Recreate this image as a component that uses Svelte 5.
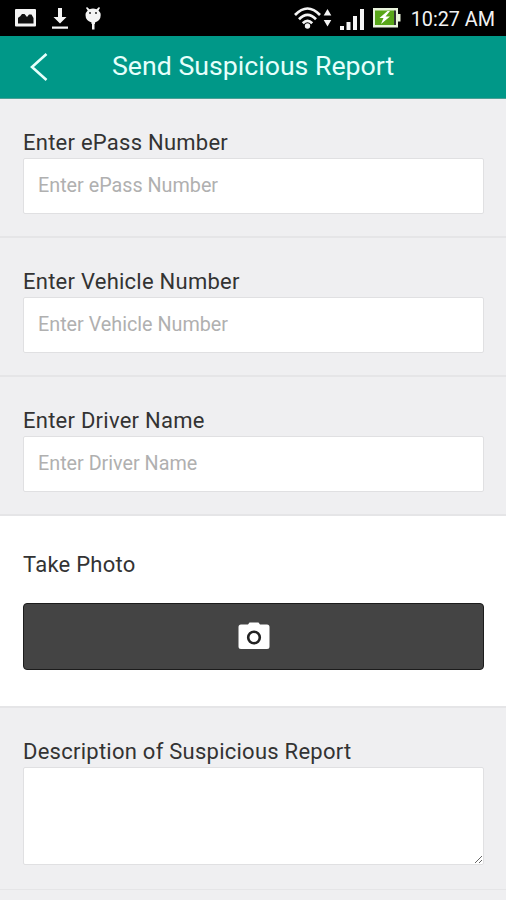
<script>
   const fields = [
      { id: "epass-number", label: "Enter ePass Number" },
      { id: "vehicle-number", label: "Enter Vehicle Number" },
      { id: "driver-name", label: "Enter Driver Name" }
   ];

   let values = $state({});
   let description = $state("");
</script>

<div class="screen">
   <div class="status-bar">
      <svg class="picture" width="22" height="19" viewBox="0 0 22 19">
         <rect width="21" height="17.500" rx="1" fill="#f4f4f4" />
         <path fill="#111" d="M3 14.500V9Q4 7.500 5 7.500L7 5h2.500L12 8l2-2.500h2.500L18.500 9v5.500z" />
      </svg>
      <svg class="download" width="18" height="22" viewBox="0 0 18 22">
         <path fill="#f4f4f4" d="M7 0h4v9h4.500L9 15.500 2.500 9H7zM1 18.500h16v2.200H1z" />
      </svg>
      <svg class="android" width="18" height="23" viewBox="0 0 18 23">
         <path fill="#f4f4f4" d="M3 0l2.500 2.200Q9 1 12.500 2.200L15 0l1 1-1.500 2.500q2.200 2 2.200 4.500 0 5.500-5.700 7.500v1.500h-.500v5.500H8V17h-.500v-1.500Q1.500 13.500 1.500 8q0-2.500 2.200-4.500L2 1z" />
         <circle cx="6" cy="6" r="0.900" fill="#111" />
         <circle cx="12" cy="6" r="0.900" fill="#111" />
      </svg>
      <span class="spacer"></span>
      <svg class="wifi" width="38" height="24" viewBox="0 0 38 24">
         <g fill="none" stroke="#f4f4f4" stroke-width="2.700">
            <path d="M1 9Q13.500-4 26 9" />
            <path d="M5 13.200Q13.500 4.500 22 13.200" />
            <path d="M8.800 17.200Q13.500 12.500 18.200 17.200" />
         </g>
         <circle cx="13.500" cy="20" r="2.700" fill="#f4f4f4" />
         <path fill="#f4f4f4" d="M33.500 3l3.800 6.500h-7.600zM33.500 20.500l3.800-6.500h-7.600z" />
      </svg>
      <svg class="signal" width="25" height="22" viewBox="0 0 25 22">
         <path fill="#f4f4f4" d="M0 17h4v4H0zM6.500 13h4v8h-4zM13 7h4v14h-4zM20 0h4v21h-4z" />
      </svg>
      <svg class="battery" width="28" height="20" viewBox="0 0 28 20">
         <path fill="#e9f3dc" d="M0 0h25v6h2.500v7.500H25v6H0z" />
         <path fill="#58a618" d="M2 2.500h19.500v14.500H2z" />
         <path fill="#333" d="M21 2.500h2v14.500h-2z" />
         <path fill="#fff" d="M14.500 3L6.500 10h4l-2.500 6 9-7.500h-4.500L17 3z" />
      </svg>
      <span class="clock">10:27 AM</span>
   </div>

   <header>
      <button class="back" aria-label="Back">
         <svg width="18" height="28" viewBox="0 0 18 28">
            <path d="M16.500 1L2 14l14.500 13" fill="none" stroke="#e6fffb" stroke-width="2.600" />
         </svg>
      </button>
      <h1>Send Suspicious Report</h1>
   </header>

   <main>
      {#each fields as field}
         <section class="field">
            <label for={field.id}>{field.label}</label>
            <input type="text" id={field.id} placeholder={field.label} bind:value={values[field.id]} />
         </section>
      {/each}

      <section class="photo">
         <span class="label">Take Photo</span>
         <button class="camera" aria-label="Take Photo">
            <svg width="32" height="28" viewBox="0 0 32 28">
               <path fill="#fff" d="M3 2.500h7L11.500.5h9l1.500 2h7q2.500 0 2.500 2.500v19.500q0 2.500-2.500 2.500H3Q.5 27 .5 24.500V5Q.5 2.500 3 2.500z" />
               <circle cx="16" cy="15.500" r="5.800" fill="none" stroke="#222" stroke-width="2.600" />
            </svg>
         </button>
      </section>

      <section class="description">
         <label for="description">Description of Suspicious Report</label>
         <textarea id="description" bind:value={description}></textarea>
      </section>
   </main>
</div>

<style>
:global(body) {
   margin: 0;
   background: #efeff1;
}
.screen {
   height: 900px;
   overflow: hidden;
   background-color: #efeff1;
   font-family: Roboto, sans-serif;
   color: #333;
}
.status-bar {
   display: flex;
   align-items: flex-start;
   box-sizing: border-box;
   height: 36px;
   padding: 0 11px 0 15px;
   background-color: #000;
}
.picture {
   margin-top: 9px;
}
.download {
   margin: 8px 0 0 14px;
}
.android {
   margin: 7px 0 0 15px;
}
.spacer {
   flex: 1;
}
.wifi {
   margin-top: 6px;
}
.signal {
   margin: 9px 0 0 8px;
}
.battery {
   margin: 8px 0 0 8px;
}
.clock {
   margin-left: 10px;
   font-size: 19.800px;
   line-height: 39px;
   color: #f2f2f2;
   white-space: nowrap;
}
header {
   display: flex;
   align-items: center;
   box-sizing: border-box;
   height: 63px;
   border-bottom: 1px solid #4b9f95;
   background-color: #009888;
}
.back {
   display: flex;
   margin-left: 30px;
   padding: 0;
   border: none;
   background: none;
}
h1 {
   margin: 0 0 2px 64px;
   font-size: 26.700px;
   font-weight: 400;
   color: #e6fffb;
   white-space: nowrap;
}
section {
   box-sizing: border-box;
   padding: 0 22px 0 23px;
   border-bottom: 2px solid #e5e5e7;
}
label,
.label {
   display: block;
   font-size: 22px;
   line-height: 26px;
   letter-spacing: 0.250px;
}
.field {
   height: 139px;
   padding-top: 31px;
}
input,
textarea {
   display: block;
   box-sizing: border-box;
   width: 100%;
   margin-top: 2px;
   border: 1px solid #e0e0e2;
   border-radius: 2px;
   outline: none;
   background-color: #fff;
   font-family: inherit;
   font-size: 19.750px;
}
input {
   height: 56px;
   padding: 0 14px 2px;
}
input::placeholder {
   color: #b0b0b0;
}
.photo {
   height: 192px;
   padding-top: 36px;
   background-color: #fff;
}
.camera {
   display: flex;
   justify-content: center;
   align-items: center;
   box-sizing: border-box;
   width: 100%;
   height: 67px;
   margin-top: 25px;
   padding-bottom: 2px;
   border: 1px solid #1c1c1c;
   border-radius: 4px;
   background-color: #444;
}
.description {
   height: 182px;
   padding-top: 31px;
   border-bottom-width: 1px;
}
textarea {
   height: 98px;
}
</style>
